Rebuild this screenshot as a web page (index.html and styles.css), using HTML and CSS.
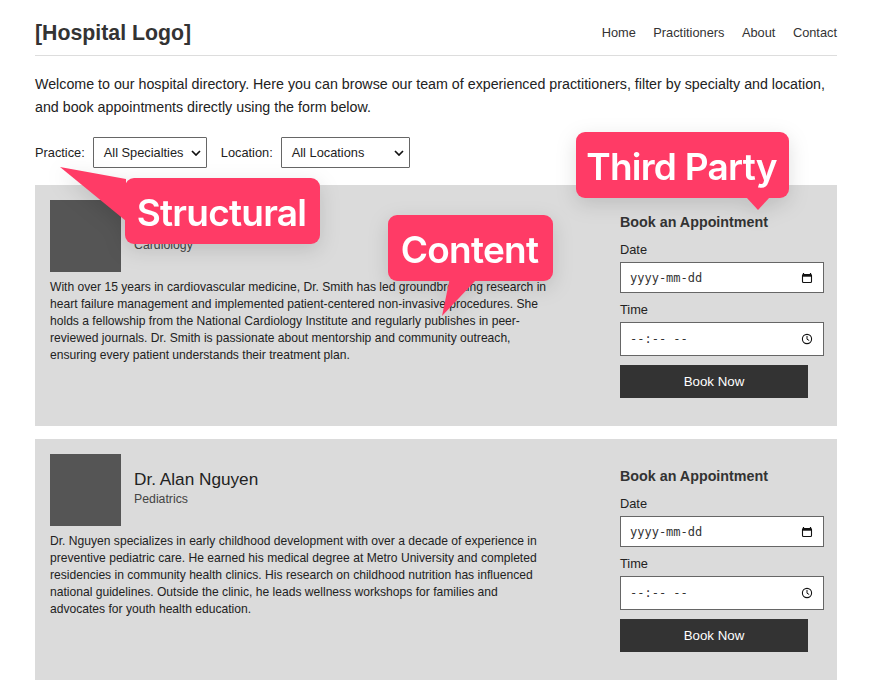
FILE: index.html
```html
<!DOCTYPE html>
<html lang="en">
<head>
<meta charset="utf-8">
<title>Hospital Directory</title>
<link rel="stylesheet" href="styles.css">
</head>
<body>
<div class="page">
  <header class="site-header">
    <div class="logo">[Hospital Logo]</div>
    <nav class="nav"><a>Home</a><a>Practitioners</a><a>About</a><a>Contact</a></nav>
  </header>
  <p class="intro">Welcome to our hospital directory. Here you can browse our team of experienced practitioners, filter by specialty and location, and book appointments directly using the form below.</p>
  <div class="filters">
    <label class="filter-label">Practice:</label>
    <div class="select select-practice"><span>All Specialties</span><svg class="chev" viewBox="0 0 10 6" width="10" height="6"><path d="M1 1l4 4 4-4" fill="none" stroke="#111" stroke-width="1.7"/></svg></div>
    <label class="filter-label">Location:</label>
    <div class="select select-location"><span>All Locations</span><svg class="chev" viewBox="0 0 10 6" width="10" height="6"><path d="M1 1l4 4 4-4" fill="none" stroke="#111" stroke-width="1.7"/></svg></div>
  </div>

  <section class="card">
    <div class="info">
      <div class="person">
        <div class="photo"></div>
        <div class="who">
          <div class="name">Dr. Jane Smith</div>
          <div class="spec">Cardiology</div>
        </div>
      </div>
      <p class="bio">With over 15 years in cardiovascular medicine, Dr. Smith has led groundbreaking research in heart failure management and implemented patient-centered non-invasive procedures. She holds a fellowship from the National Cardiology Institute and regularly publishes in peer-reviewed journals. Dr. Smith is passionate about mentorship and community outreach, ensuring every patient understands their treatment plan.</p>
    </div>
    <form class="booking">
      <div class="booking-title">Book an Appointment</div>
      <div class="field-label">Date</div>
      <div class="control control-date"><span>yyyy-mm-dd</span>
        <svg viewBox="0 0 12 12" width="12" height="12"><path d="M2.5 1v1.5M9.5 1v1.5" stroke="#111" stroke-width="1.2"/><rect x="1.5" y="2.5" width="9" height="8" rx="1" fill="none" stroke="#111" stroke-width="1.1"/><rect x="1.5" y="2.5" width="9" height="2.2" fill="#111"/></svg>
      </div>
      <div class="field-label field-time">Time</div>
      <div class="control control-time"><span>--:-- --</span>
        <svg viewBox="0 0 12 12" width="12" height="12"><circle cx="6" cy="6" r="4.6" fill="none" stroke="#111" stroke-width="1.1"/><path d="M6 3v3.2l2.2 1.3" fill="none" stroke="#111"/></svg>
      </div>
      <div class="book-btn">Book Now</div>
    </form>
  </section>

  <section class="card">
    <div class="info">
      <div class="person">
        <div class="photo"></div>
        <div class="who">
          <div class="name">Dr. Alan Nguyen</div>
          <div class="spec">Pediatrics</div>
        </div>
      </div>
      <p class="bio">Dr. Nguyen specializes in early childhood development with over a decade of experience in preventive pediatric care. He earned his medical degree at Metro University and completed residencies in community health clinics. His research on childhood nutrition has influenced national guidelines. Outside the clinic, he leads wellness workshops for families and advocates for youth health education.</p>
    </div>
    <form class="booking">
      <div class="booking-title">Book an Appointment</div>
      <div class="field-label">Date</div>
      <div class="control control-date"><span>yyyy-mm-dd</span>
        <svg viewBox="0 0 12 12" width="12" height="12"><path d="M2.5 1v1.5M9.5 1v1.5" stroke="#111" stroke-width="1.2"/><rect x="1.5" y="2.5" width="9" height="8" rx="1" fill="none" stroke="#111" stroke-width="1.1"/><rect x="1.5" y="2.5" width="9" height="2.2" fill="#111"/></svg>
      </div>
      <div class="field-label field-time">Time</div>
      <div class="control control-time"><span>--:-- --</span>
        <svg viewBox="0 0 12 12" width="12" height="12"><circle cx="6" cy="6" r="4.6" fill="none" stroke="#111" stroke-width="1.1"/><path d="M6 3v3.2l2.2 1.3" fill="none" stroke="#111"/></svg>
      </div>
      <div class="book-btn">Book Now</div>
    </form>
  </section>
</div>

<div class="callout callout-structural">Structural</div>
<div class="callout callout-content">Content</div>
<div class="callout callout-third">Third Party</div>
</body>
</html>
```
FILE: styles.css
```css
* { box-sizing: border-box; }
html, body { margin: 0; padding: 0; background: #fff; overflow: hidden; }
body {
  position: relative;
  height: 683px;
  font-family: "Liberation Sans", Arial, sans-serif;
  color: #222;
}
.page { padding: 0 34px 0 35px; }

.site-header {
  height: 56px;
  padding-top: 20px;
  display: flex;
  justify-content: space-between;
  align-items: flex-start;
  border-bottom: 1px solid #ddd;
}
.logo { font-size: 21.3px; line-height: 26px; font-weight: bold; color: #333; }
.nav { display: flex; gap: 17.5px; padding-top: 5px; font-size: 12.8px; line-height: 16px; color: #333; }

.intro { margin: 17px 0 0; font-size: 14.26px; line-height: 23px; color: #222; }

.filters { display: flex; align-items: center; margin-top: 18px; height: 31px; font-size: 12.8px; }
.filter-label { color: #222; margin-right: 8px; }
.select {
  height: 31px;
  display: flex;
  align-items: center;
  justify-content: space-between;
  padding: 0 5px 0 10px;
  background: #fff;
  border: 1px solid #666;
  border-radius: 1px;
  color: #222;
}
.select-practice { width: 114px; margin-right: 14px; }
.select-location { width: 129px; }

.card {
  display: flex;
  height: 241px;
  margin-top: 17px;
  padding: 15px 13px 15px 15px;
  background: #dbdbdb;
}
.card + .card { margin-top: 13px; }
.info { width: 500px; margin-right: 70px; }
.person { display: flex; align-items: center; gap: 13px; }
.photo { width: 71px; height: 72px; background: #555; }
.who { padding-bottom: 5px; }
.name { font-size: 17.2px; line-height: 22px; color: #222; }
.spec { margin-top: 2px; font-size: 12.3px; line-height: 15px; color: #444; }
.bio { margin: 7px 0 0; font-size: 12.1px; line-height: 17px; color: #222; }

.booking { width: 204px; padding-top: 14px; }
.booking-title { font-size: 14.3px; line-height: 17px; font-weight: bold; color: #333; }
.field-label { margin-top: 10px; font-size: 12.8px; line-height: 17px; color: #222; }
.field-time { margin-top: 8px; }
.control {
  display: flex;
  align-items: center;
  justify-content: space-between;
  padding: 0 10px 0 9px;
  background: #fff;
  border: 1px solid #666;
  font-family: "DejaVu Sans Mono", "Liberation Mono", monospace;
  font-size: 12px;
  color: #333;
}
.control-date { height: 31px; margin-top: 4px; }
.control-time { height: 34px; margin-top: 4px; }
.control span { white-space: pre; }
.book-btn {
  width: 188px;
  height: 33px;
  margin-top: 9px;
  padding-bottom: 1px;
  display: flex;
  align-items: center;
  justify-content: center;
  background: #333;
  color: #fff;
  font-size: 13.3px;
}

.callout {
  position: absolute;
  height: 66px;
  padding: 2px 2px 0 0;
  display: flex;
  align-items: center;
  justify-content: center;
  background: #ff3b66;
  color: #fff;
  border-radius: 9px;
  font-family: Inter, "Liberation Sans", sans-serif;
  font-size: 37px;
  font-weight: 600;
  letter-spacing: -0.75px;
  filter: drop-shadow(0 6px 10px rgba(0, 0, 0, 0.13));
}
.callout::after {
  content: "";
  position: absolute;
  background: #ff3b66;
}
.callout-structural { left: 125px; top: 178px; width: 195px; }
.callout-structural::after {
  left: -65px; top: -11px;
  width: 66px; height: 54px;
  clip-path: polygon(0 0, 100% 22%, 100% 100%);
}
.callout-content { left: 388px; top: 215px; width: 165px; }
.callout-content::after {
  left: 54px; top: 65px;
  width: 34px; height: 36px;
  clip-path: polygon(22% 0, 100% 0, 0 100%);
}
.callout-third { left: 576px; top: 132px; width: 213px; }
.callout-third::after {
  left: 170px; top: 65px;
  width: 24px; height: 13px;
  clip-path: polygon(0 0, 100% 0, 50% 100%);
}
```
